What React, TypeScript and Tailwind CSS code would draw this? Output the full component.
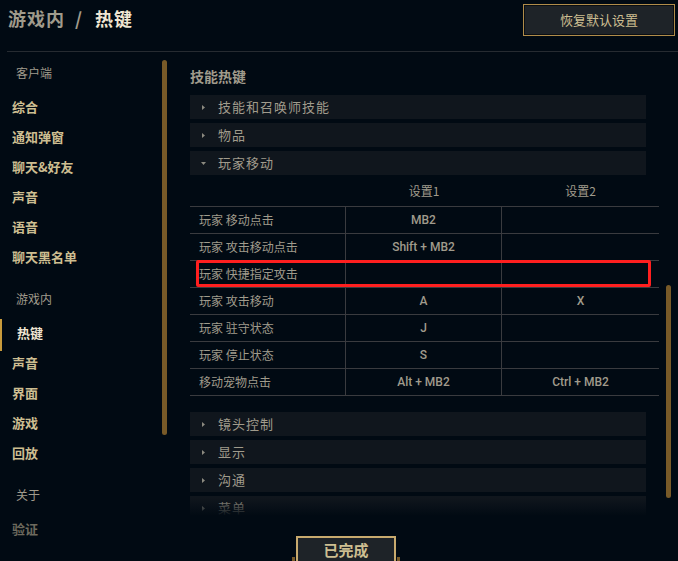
import React from 'react';

const cjk = { fontFamily: '"Noto Sans CJK SC", "Noto Sans", sans-serif' };

const clientItems = ['综合', '通知弹窗', '聊天&好友', '声音', '语音', '聊天黑名单'];
const gameItems = ['热键', '声音', '界面', '游戏', '回放'];

const rows: [string, string, string][] = [
    ['玩家 移动点击', 'MB2', ''],
    ['玩家 攻击移动点击', 'Shift + MB2', ''],
    ['玩家 快捷指定攻击', '', ''],
    ['玩家 攻击移动', 'A', 'X'],
    ['玩家 驻守状态', 'J', ''],
    ['玩家 停止状态', 'S', ''],
    ['移动宠物点击', 'Alt + MB2', 'Ctrl + MB2'],
];

const SectionLabel = ({ text }: { text: string }) => (
    <div className="h-[30px] pl-[16px] flex items-center text-[12px] text-[#a09b8c]">{text}</div>
);

const NavItem = ({ text, active, faded }: { text: string; active?: boolean; faded?: boolean }) => (
    <div className="relative h-[30px] flex items-center">
        {active && <div className="absolute left-0 top-[1px] w-[2px] h-[32px] bg-[#c89b3c]" />}
        <span
            className={
                'font-bold text-[13px] ' +
                (active ? 'pl-[17px] text-[#f0e6d2]' : faded ? 'pl-[12px] text-[#6e6a5e]' : 'pl-[12px] text-[#cdbe91]')
            }
        >
            {text}
        </span>
    </div>
);

const Arrow = ({ open }: { open?: boolean }) => (
    <svg width="5" height="5" viewBox="0 0 5 5" className="fill-[#8c8a80]">
        {open ? <path d="M0 1 L5 1 L2.5 4 Z" /> : <path d="M1 0 L4 2.5 L1 5 Z" />}
    </svg>
);

const Fold = ({ text, open }: { text: string; open?: boolean }) => (
    <div className="h-[24px] w-[456px] bg-[#10161d] flex items-center">
        <span className="w-[28px] pl-[11px] flex items-center">
            <Arrow open={open} />
        </span>
        <span className="text-[13px] text-[#a09b8c] tracking-[1px]">{text}</span>
    </div>
);

export default function App() {
    return (
        <div className="w-[678px] h-[561px] bg-[#010a13] overflow-hidden relative" style={cjk}>
            {/* header */}
            <div className="ml-[7px] h-[52px] border-b border-[#262b31] flex justify-between items-start">
                <div className="pt-[5px] pl-[1px] text-[18px] font-bold tracking-[1px] flex">
                    <span className="text-[#a09b8c]">游戏内</span>
                    <span className="text-[#a09b8c] ml-[10px] mr-[12px]">/</span>
                    <span className="text-[#f0e6d2]">热键</span>
                </div>
                <button className="mt-[4px] mr-[3px] w-[152px] h-[32px] border border-[#b08c4a] bg-[#1e2328] text-[13px] text-[#cdbe91] shadow-[inset_0_0_0_1px_#0a0e12]">
                    恢复默认设置
                </button>
            </div>

            <div className="flex">
                {/* sidebar */}
                <div className="w-[190px] shrink-0 flex">
                    <div className="w-[162px] pt-[6px]">
                        <SectionLabel text="客户端" />
                        <div className="mt-[4px]">
                            {clientItems.map((t) => (
                                <NavItem key={t} text={t} />
                            ))}
                        </div>
                        <div className="mt-[12px]">
                            <SectionLabel text="游戏内" />
                        </div>
                        <div className="mt-[4px]">
                            {gameItems.map((t, i) => (
                                <NavItem key={t} text={t} active={i === 0} />
                            ))}
                        </div>
                        <div className="mt-[12px]">
                            <SectionLabel text="关于" />
                        </div>
                        <div className="mt-[4px]">
                            <NavItem text="验证" faded />
                        </div>
                    </div>
                    <div className="mt-[8px] w-[5px] h-[375px] rounded-full bg-[#785a28]" />
                </div>

                {/* content */}
                <div className="relative w-[488px] h-[464px] overflow-hidden">
                    <div className="pt-[14px] h-[34px] text-[14px] font-bold text-[#a09b8c] leading-[20px]">技能热键</div>
                    <div className="mt-[9px] flex flex-col gap-[4px]">
                        <Fold text="技能和召唤师技能" />
                        <Fold text="物品" />
                        <Fold text="玩家移动" open />
                    </div>

                    <div className="w-[469px] text-[12px] text-[#a09b8c]">
                        <div className="h-[31px] grid grid-cols-[156px_156px_157px] items-center">
                            <div />
                            <div className="text-center">设置1</div>
                            <div className="text-center">设置2</div>
                        </div>
                        {rows.map(([name, a, b], i) => (
                            <div
                                key={name}
                                className={
                                    'h-[27px] grid grid-cols-[156px_156px_157px] border-t border-[#3a3b3f]' +
                                    (i === rows.length - 1 ? ' h-[28px] border-b' : '')
                                }
                            >
                                <div className="pl-[9px] flex items-center border-r border-[#3a3b3f]">{name}</div>
                                <div
                                    className="flex items-center justify-center border-r border-[#3a3b3f] font-medium"
                                    style={{ fontFamily: 'Roboto, "Noto Sans CJK SC", sans-serif' }}
                                >
                                    {a}
                                </div>
                                <div
                                    className="flex items-center justify-center font-medium"
                                    style={{ fontFamily: 'Roboto, "Noto Sans CJK SC", sans-serif' }}
                                >
                                    {b}
                                </div>
                            </div>
                        ))}
                    </div>

                    <div className="mt-[16px] flex flex-col gap-[4px]">
                        <Fold text="镜头控制" />
                        <Fold text="显示" />
                        <Fold text="沟通" />
                        <Fold text="菜单" />
                    </div>

                    {/* fade at the bottom */}
                    <div className="absolute left-0 right-0 bottom-0 h-[18px] bg-gradient-to-b from-[#010a13]/0 to-[#010a13]" />

                    {/* red highlight */}
                    <div className="absolute left-[6px] top-[208px] w-[455px] h-[27px] border-[3px] border-[#ff1f1f] rounded-[2px]" />

                    {/* right scrollbar */}
                    <div className="absolute left-[476px] top-[233px] w-[5px] h-[213px] rounded-full bg-[#785a28]" />
                </div>
            </div>

            {/* done button */}
            <div className="absolute left-[296px] top-[536px]">
                <div className="absolute -left-[4px] top-[21px] w-[3px] h-[6px] bg-[#785a28]" />
                <div className="absolute -right-[4px] top-[21px] w-[3px] h-[6px] bg-[#785a28]" />
                <button className="w-[100px] h-[34px] border-2 border-[#c8aa6e] bg-[#1e2328] text-[15px] font-bold text-[#cdbe91] pb-[6px]">
                    已完成
                </button>
            </div>
        </div>
    );
}
